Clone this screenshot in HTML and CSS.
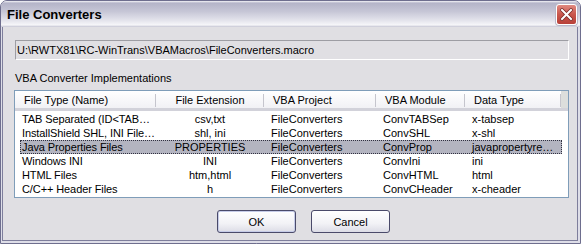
FILE: index.html
```html
<!DOCTYPE html>
<html lang="en">
<head>
    <meta charset="UTF-8">
    <title>File Converters</title>
    <link rel="stylesheet" href="styles.css">
</head>
<body>
    <div class="window">
        <div class="titlebar">
            <span class="title">File Converters</span>
            <span class="close-btn">
                <svg width="13" height="13" viewBox="0 0 13 13">
                    <path d="M2 2 L11 11 M11 2 L2 11" stroke="#7a2a26" stroke-width="3.6" stroke-linecap="square"/>
                    <path d="M2 2 L11 11 M11 2 L2 11" stroke="#ffffff" stroke-width="2" stroke-linecap="square"/>
                </svg>
            </span>
        </div>
        <div class="client">
            <div class="path-box">U:\RWTX81\RC-WinTrans\VBAMacros\FileConverters.macro</div>
            <div class="group-label">VBA Converter Implementations</div>
            <div class="listview">
                <div class="lv-head">
                    <div class="hcell">File Type (Name)</div>
                    <div class="hcell center">File Extension</div>
                    <div class="hcell">VBA Project</div>
                    <div class="hcell">VBA Module</div>
                    <div class="hcell">Data Type</div>
                    <div class="hfill"></div>
                </div>
                <div class="lv-row">
                    <div class="cell first">TAB Separated (ID&lt;TAB…</div>
                    <div class="cell center">csv,txt</div>
                    <div class="cell">FileConverters</div>
                    <div class="cell">ConvTABSep</div>
                    <div class="cell">x-tabsep</div>
                </div>
                <div class="lv-row">
                    <div class="cell first">InstallShield SHL, INI File…</div>
                    <div class="cell center">shl, ini</div>
                    <div class="cell">FileConverters</div>
                    <div class="cell">ConvSHL</div>
                    <div class="cell">x-shl</div>
                </div>
                <div class="lv-row selected">
                    <div class="cell first">Java Properties Files</div>
                    <div class="cell center">PROPERTIES</div>
                    <div class="cell">FileConverters</div>
                    <div class="cell">ConvProp</div>
                    <div class="cell">javapropertyre…</div>
                </div>
                <div class="lv-row">
                    <div class="cell first">Windows INI</div>
                    <div class="cell center">INI</div>
                    <div class="cell">FileConverters</div>
                    <div class="cell">ConvIni</div>
                    <div class="cell">ini</div>
                </div>
                <div class="lv-row">
                    <div class="cell first">HTML Files</div>
                    <div class="cell center">htm,html</div>
                    <div class="cell">FileConverters</div>
                    <div class="cell">ConvHTML</div>
                    <div class="cell">html</div>
                </div>
                <div class="lv-row">
                    <div class="cell first">C/C++ Header Files</div>
                    <div class="cell center">h</div>
                    <div class="cell">FileConverters</div>
                    <div class="cell">ConvCHeader</div>
                    <div class="cell">x-cheader</div>
                </div>
            </div>
            <div class="buttons">
                <button class="btn default">OK</button>
                <button class="btn">Cancel</button>
            </div>
        </div>
    </div>
</body>
</html>
```

FILE: styles.css
```css
body {
    margin: 0;
    background: #ffffff;
    font-family: "Liberation Sans", Arial, sans-serif;
    font-size: 11px;
    color: #000000;
}

.window {
    width: 581px;
    height: 244px;
    box-sizing: border-box;
    border: 1px solid #6e6e8e;
    border-radius: 7px 7px 0 0;
    background: #dedee8;
    display: flex;
    flex-direction: column;
    overflow: hidden;
}

.titlebar {
    height: 26px;
    flex: none;
    display: flex;
    align-items: center;
    justify-content: space-between;
    padding: 0 3px 0 6px;
    background: linear-gradient(to bottom, #f4f4f8 0, #b4b4c8 8%, #c6c6d6 40%, #e4e4ec 75%, #f6f6f9 92%, #c4c4d2 100%);
}

.title {
    font-weight: bold;
    font-size: 13px;
    padding-top: 1px;
}

.close-btn {
    width: 19px;
    height: 19px;
    border: 1px solid #ffffff;
    border-radius: 3px;
    background: linear-gradient(to bottom, #e08a80, #c9564c 50%, #b84038);
    display: flex;
    align-items: center;
    justify-content: center;
    box-shadow: 0 0 0 1px #b8b8c8;
}

.client {
    flex: 1;
    margin: 0 2px 2px 1px;
    border: 1px solid #7e7e9c;
    border-top: none;
    background: #e0dfe3;
    padding: 13px 8px 0 11px;
    display: flex;
    flex-direction: column;
}

.path-box {
    height: 18px;
    line-height: 18px;
    border: 1px solid #9d9da3;
    border-right-color: #ffffff;
    border-bottom-color: #ffffff;
    padding-left: 1px;
    margin-left: 1px;
}

.group-label {
    margin-top: 12px;
    height: 18px;
    line-height: 13px;
    padding-left: 1px;
}

.listview {
    height: 106px;
    border: 1px solid #7f9db9;
    background: #ffffff;
}

.lv-head {
    height: 17px;
    display: grid;
    grid-template-columns: 141px 108px 112px 89px 96px 1fr;
    background: linear-gradient(to bottom, #ffffff, #f1f1f5);
    border-bottom: 3px solid #d2d2da;
    margin-bottom: 1px;
}

.hcell {
    line-height: 18px;
    padding-left: 9px;
    white-space: nowrap;
    overflow: hidden;
    position: relative;
}

.hcell::after {
    content: "";
    position: absolute;
    right: 0;
    top: 3px;
    bottom: 1px;
    width: 1px;
    background: #c5c5cd;
}

.hcell.center {
    text-align: center;
    padding-left: 0;
}

.hfill {
    background: #dcdedc;
}

.lv-row {
    height: 14px;
    display: grid;
    grid-template-columns: 141px 108px 112px 89px 96px;
    line-height: 14px;
}

.cell {
    padding-left: 7px;
    white-space: nowrap;
}

.cell.first {
    letter-spacing: -0.1px;
}

.cell.center {
    text-align: center;
    padding-left: 0;
}

.lv-row.selected {
    background: #b3b4c0;
    outline: 1px dotted #303040;
    outline-offset: -1px;
    margin: 0 6px 0 5px;
    grid-template-columns: 136px 108px 112px 89px 96px;
}

.lv-row.selected .cell.first {
    padding-left: 2px;
}

.buttons {
    display: flex;
    gap: 15px;
    padding-left: 203px;
    margin-top: 12px;
}

.btn {
    width: 79px;
    height: 23px;
    font-family: "Liberation Sans", Arial, sans-serif;
    font-size: 11px;
    color: #000000;
    border: 1px solid #4a4a6a;
    border-radius: 3px;
    background: linear-gradient(to bottom, #ffffff, #f2f2f6 60%, #dcdce6);
    padding: 0;
}

.btn.default {
    box-shadow: inset 0 0 0 1px #c6cce8;
}
```
